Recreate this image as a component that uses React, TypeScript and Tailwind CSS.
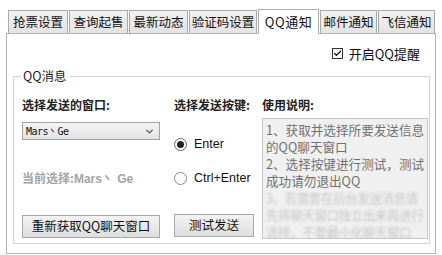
import { ChevronDown, Check } from 'lucide-react';

const TABS = [
  { label: '抢票设置', w: 'w-[60px]' },
  { label: '查询起售', w: 'w-[59px]' },
  { label: '最新动态', w: 'w-[59px]' },
  { label: '验证码设置', w: 'w-[68px]' },
];

const TABS_AFTER = [
  { label: '邮件通知', w: 'w-[57px]' },
  { label: '飞信通知', w: 'w-[57px]' },
];

const HELP_LINES = ['1、获取并选择所要发送信息', '的QQ聊天窗口', '2、选择按键进行测试，测试', '成功请勿退出QQ'];
const NOISE_LINES = ['3、若需要在后台发送消息请', '先将聊天窗口独立出来再进行', '选择，不要最小化聊天窗口'];

function Tab({ label, w }: { label: string; w: string }) {
  return (
    <div
      className={`${w} shrink-0 h-[23px] flex items-center justify-center overflow-hidden whitespace-nowrap border border-b-0 border-[#a9a9a9] bg-gradient-to-b from-[#f2f2f2] to-[#e3e3e3] text-[12.5px] text-[#111]`}
    >
      {label}
    </div>
  );
}

export default function App() {
  return (
    <div className="w-[442px] h-[255px] bg-white overflow-hidden font-['Noto_Sans_CJK_SC','Liberation_Sans',sans-serif] text-[#111]">
      {/* tab strip */}
      <div className="flex items-end gap-[1px] pl-[8px] pt-[8px] h-[33px] relative z-10">
        {TABS.map((t) => (
          <Tab key={t.label} {...t} />
        ))}
        <div className="w-[61px] shrink-0 h-[25px] -mb-[1px] flex items-center justify-center whitespace-nowrap border border-b-0 border-[#a9a9a9] bg-white text-[13px] tracking-[0.5px] text-[#111]">
          QQ通知
        </div>
        {TABS_AFTER.map((t) => (
          <Tab key={t.label} {...t} />
        ))}
      </div>

      {/* panel */}
      <div className="ml-[6px] w-[430px] h-[221px] border border-[#b4b4b4] bg-white pl-[6px] pr-[5px]">
        <div className="flex justify-end items-center gap-[6px] pt-[9px] pr-[10px] h-[30px] text-[13px]">
          <span className="w-[11px] h-[11px] border border-[#333] flex items-center justify-center bg-white">
            <Check className="w-[9px] h-[9px] text-[#111]" strokeWidth={3.5} />
          </span>
          <span>开启QQ提醒</span>
        </div>

        {/* group box */}
        <div className="relative mt-[12px] h-[168px] border border-[#d4d4d4] pl-[8px] pt-[21px]">
          <span className="absolute left-[7px] -top-[9px] bg-white px-[2px] text-[12.5px] leading-[16px] text-[#222]">
            QQ消息
          </span>
          <div className="flex">
            {/* column 1 */}
            <div className="w-[152px] shrink-0 flex flex-col">
              <div className="text-[12px] leading-[14px] font-bold text-[#222]">选择发送的窗口:</div>
              <div className="mt-[10px] w-[138px] h-[18px] border border-[#a3a3a3] bg-gradient-to-b from-[#f4f4f4] to-[#e4e4e4] flex items-center justify-between pl-[3px] pr-[4px]">
                <span className="font-['DejaVu_Sans_Mono','Liberation_Mono',monospace] text-[10px] tracking-[-0.5px] text-[#111]">Mars丶Ge</span>
                <ChevronDown className="w-[11px] h-[11px] text-[#555]" strokeWidth={3} />
              </div>
              <div className="mt-[31px] text-[12px] leading-[14px] font-bold text-[#a3a3a3] whitespace-nowrap">
                当前选择:<span className="font-['Liberation_Sans',sans-serif]">Mars丶 Ge</span>
              </div>
              <button className="mt-[29px] w-[138px] h-[23px] border border-[#a8a8a8] bg-gradient-to-b from-[#f3f3f3] to-[#dedede] text-[12.5px] text-[#111]">
                重新获取QQ聊天窗口
              </button>
            </div>

            {/* column 2 */}
            <div className="w-[88px] shrink-0 flex flex-col">
              <div className="text-[12px] leading-[14px] font-bold text-[#222] whitespace-nowrap">选择发送按键:</div>
              <div className="mt-[24px] h-[16px] flex items-center gap-[7px] text-[12.5px] font-['Liberation_Sans',sans-serif]">
                <span className="w-[13px] h-[13px] rounded-full border border-[#666] bg-white flex items-center justify-center">
                  <span className="w-[7px] h-[7px] rounded-full bg-[#222]" />
                </span>
                <span>Enter</span>
              </div>
              <div className="mt-[18px] h-[16px] flex items-center gap-[7px] text-[12.5px] font-['Liberation_Sans',sans-serif] whitespace-nowrap">
                <span className="w-[13px] h-[13px] rounded-full border border-[#888] bg-white" />
                <span>Ctrl+Enter</span>
              </div>
              <button className="mt-[28px] w-[80px] h-[23px] border border-[#a8a8a8] bg-gradient-to-b from-[#f3f3f3] to-[#dedede] text-[12.5px] text-[#111]">
                测试发送
              </button>
            </div>

            {/* column 3 */}
            <div className="shrink-0 flex flex-col">
              <div className="text-[12px] leading-[14px] font-bold text-[#222]">使用说明:</div>
              <div className="mt-[6px] w-[166px] h-[121px] border border-[#c6c6c6] bg-[#f0f0f0] pl-[3px] pt-[2px] text-[12.6px] leading-[17px] text-[#707070] overflow-hidden">
                {HELP_LINES.map((l) => (
                  <div key={l} className="whitespace-nowrap">{l}</div>
                ))}
                <div className="blur-[0.8px] opacity-40 tracking-[-0.5px] text-[#888]">
                  {NOISE_LINES.map((l) => (
                    <div key={l} className="whitespace-nowrap">{l}</div>
                  ))}
                </div>
              </div>
            </div>
          </div>
        </div>
      </div>
    </div>
  );
}
